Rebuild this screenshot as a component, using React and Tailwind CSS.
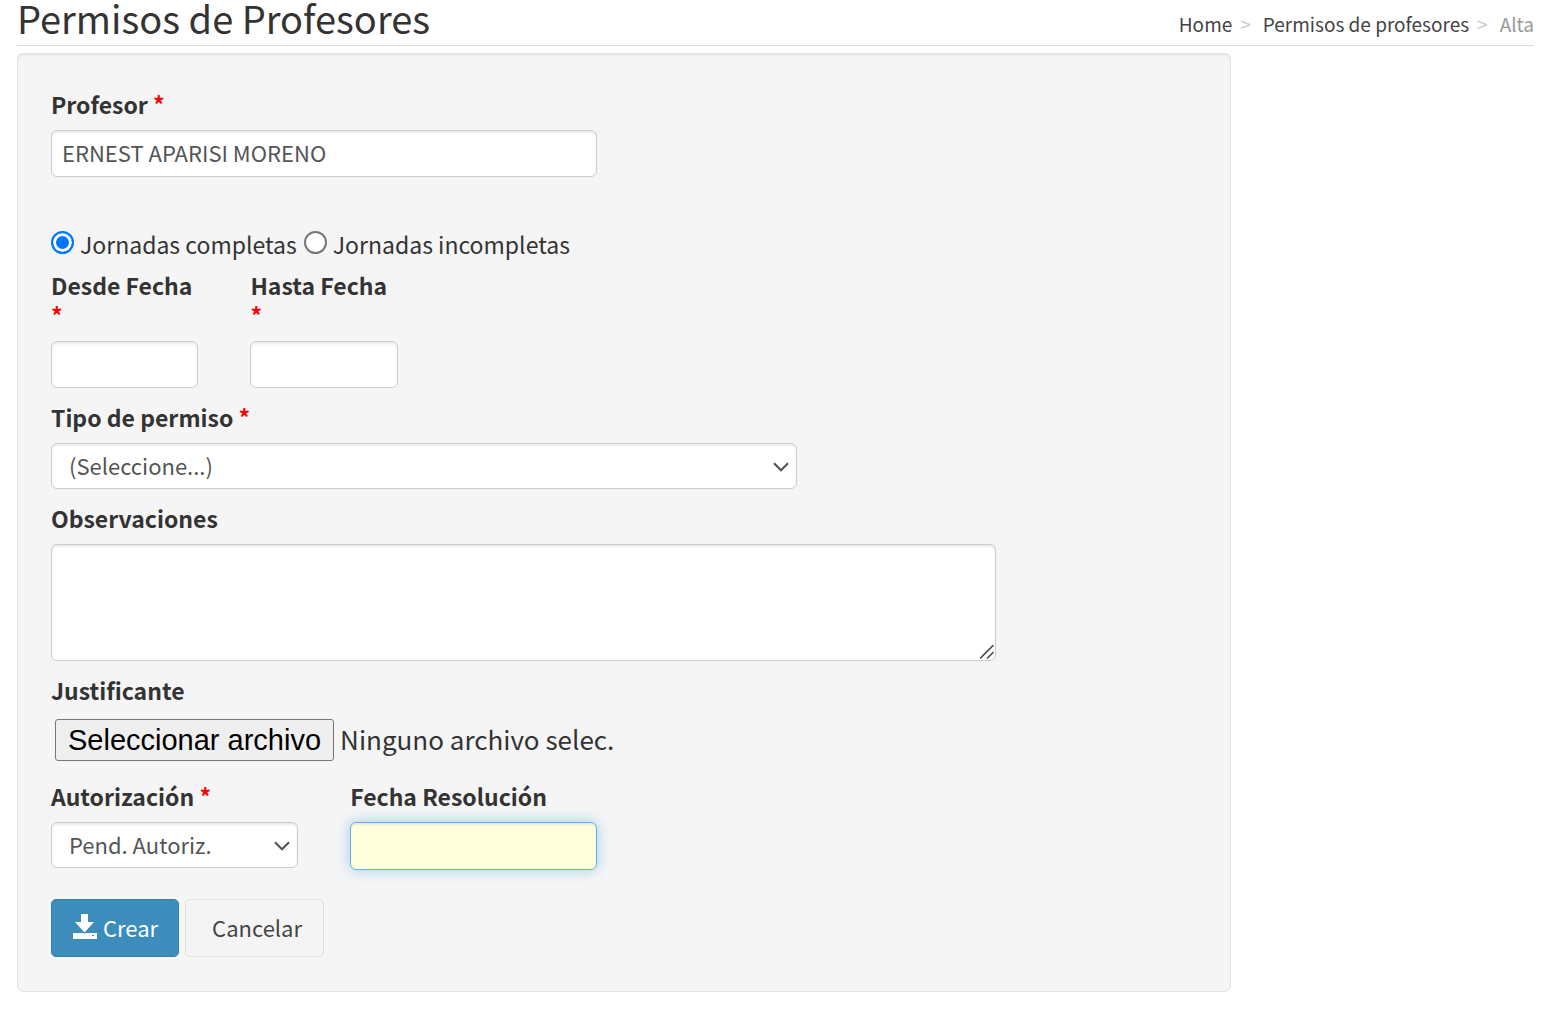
import { useState } from "react";

const field =
  "block w-full rounded-md border border-[#ccc] bg-white text-[22px] text-[#555] shadow-[inset_0_2px_2px_rgba(0,0,0,0.075)] outline-none";

function Label({ htmlFor, required, children }) {
  return (
    <label htmlFor={htmlFor} className="mb-[11px] block text-[23px] leading-[30px] font-bold">
      {children}
      {required && <span className="text-[#f00]"> *</span>}
    </label>
  );
}

function Select({ id, children }) {
  return (
    <div className="relative">
      <select id={id} className={`${field} h-[46px] appearance-none pr-10 pb-[2px] pl-[17px]`}>
        {children}
      </select>
      <svg
        className="pointer-events-none absolute top-[19px] right-2 h-[10px] w-4"
        viewBox="0 0 16 10"
        fill="none"
        stroke="#555"
        strokeWidth="2.2"
      >
        <path d="M1 1.2 8 8.2 15 1.2" />
      </svg>
    </div>
  );
}

function Radio({ label, checked, onChange }) {
  return (
    <label className="flex items-center gap-[6px]">
      <input
        type="radio"
        name="jornada"
        checked={checked}
        onChange={onChange}
        className="mb-1 size-[23px] appearance-none rounded-full border-2 border-[#767676] bg-white checked:border-[#0075ff] checked:bg-[#0075ff] checked:shadow-[inset_0_0_0_3px_#fff]"
      />
      {label}
    </label>
  );
}

export default function App() {
  const [jornada, setJornada] = useState("completas");

  return (
    <div className="pr-[14px] pb-9 pl-[17px] font-['Noto_Sans_CJK_SC',sans-serif] text-[#333]">
      <header className="mb-[7px] flex h-[46px] items-center justify-between border-b border-[#ddd]">
        <h1 className="pb-[10px] text-[38px] leading-9">Permisos de Profesores</h1>
        <nav className="flex pt-[2px] text-[19px] leading-7 text-[#444]">
          <a href="#home">Home</a>
          <span className="pr-3 pl-2 text-[#ccc]">&gt;</span>
          <a href="#permisos">Permisos de profesores</a>
          <span className="pr-3 pl-2 text-[#ccc]">&gt;</span>
          <span className="text-[#999]">Alta</span>
        </nav>
      </header>

      <form
        onSubmit={(e) => e.preventDefault()}
        className="w-4/5 rounded-md border border-[#e3e3e3] bg-[#f5f5f5] pt-[35px] pr-2 pb-[34px] pl-[7px] shadow-[inset_0_2px_2px_rgba(0,0,0,0.05)]"
      >
        <div className="grid grid-cols-12 gap-y-[14px]">
          <div className="col-span-6 px-[26px]">
            <Label htmlFor="profesor" required>Profesor</Label>
            <input id="profesor" defaultValue="ERNEST APARISI MORENO" className={`${field} h-[47px] px-[10px] pb-1`} />
          </div>

          <div className="col-span-12 mt-[37px] -mb-[14px] flex gap-[7px] px-[26px] pb-[10px] text-[23px] leading-8">
            <Radio label="Jornadas completas" checked={jornada === "completas"} onChange={() => setJornada("completas")} />
            <Radio label="Jornadas incompletas" checked={jornada === "incompletas"} onChange={() => setJornada("incompletas")} />
          </div>

          <div className="col-span-2 px-[26px]">
            <Label htmlFor="desde" required>Desde Fecha</Label>
            <input id="desde" className={`${field} h-[47px] px-[10px]`} />
          </div>
          <div className="col-span-2 px-[26px]">
            <Label htmlFor="hasta" required>Hasta Fecha</Label>
            <input id="hasta" className={`${field} h-[47px] px-[10px]`} />
          </div>

          <div className="col-span-8 col-start-1 px-[26px]">
            <Label htmlFor="tipo" required>Tipo de permiso</Label>
            <Select id="tipo">
              <option>(Seleccione...)</option>
            </Select>
          </div>

          <div className="col-span-10 col-start-1 px-[26px]">
            <Label htmlFor="observaciones">Observaciones</Label>
            <div className="relative">
              <textarea id="observaciones" className={`${field} h-[117px] resize-none px-[10px] py-2`} />
              <svg
                className="pointer-events-none absolute right-[2px] bottom-[2px] h-[14px] w-[14px]"
                viewBox="0 0 14 14"
                stroke="#555"
                strokeWidth="1.7"
              >
                <path d="M0 13.5 13.5 0M7 13.5 13.5 7" />
              </svg>
            </div>
          </div>

          <div className="col-span-12 px-[26px]">
            <Label htmlFor="justificante">Justificante</Label>
            <div className="flex items-center gap-[6px] pt-[3px] pb-[6px] pl-1">
              <input id="justificante" type="file" className="sr-only" />
              <label
                htmlFor="justificante"
                className="flex h-[42px] items-center rounded-[3px] border border-[#767676] bg-[#efefef] px-3 pt-[2px] font-['Liberation_Sans',sans-serif] text-[29px] text-black"
              >
                Seleccionar archivo
              </label>
              <span className="pb-[2px] text-[26px] leading-8">Ninguno archivo selec.</span>
            </div>
          </div>

          <div className="col-span-3 px-[26px]">
            <Label htmlFor="autorizacion" required>Autorización</Label>
            <Select id="autorizacion">
              <option>Pend. Autoriz.</option>
            </Select>
          </div>
          <div className="col-span-3 px-[26px]">
            <Label htmlFor="resolucion">Fecha Resolución</Label>
            <input
              id="resolucion"
              className="block h-12 w-full rounded-md border border-[#66afe9] bg-[#ffffdd] px-[10px] text-[22px] text-[#555] shadow-[inset_0_2px_2px_rgba(0,0,0,0.075),0_0_14px_rgba(102,175,233,0.6)] outline-none"
            />
          </div>

          <div className="col-span-12 mt-[15px] flex gap-[6px] px-[26px] text-[22px]">
            <button
              type="submit"
              className="flex h-[58px] items-center gap-[6px] rounded-[5px] border border-[#367fa9] bg-[#3c8dbc] pr-5 pb-[2px] pl-[21px] text-white"
            >
              <svg className="mb-[2px] h-[25px] w-6" viewBox="0 0 24 25" fill="#fff">
                <path d="M8 0h7v8h6l-9.500 10.500L2 8h6z" />
                <path fillRule="evenodd" d="M0 19h10.500l1 1 1-1H24v6H0zM19 21v1h2v-1z" />
              </svg>
              Crear
            </button>
            <button type="button" className="h-[58px] rounded-[5px] border border-[#ddd] bg-[#f4f4f4] pr-[21px] pb-[2px] pl-[26px] text-[#444]">
              Cancelar
            </button>
          </div>
        </div>
      </form>
    </div>
  );
}
